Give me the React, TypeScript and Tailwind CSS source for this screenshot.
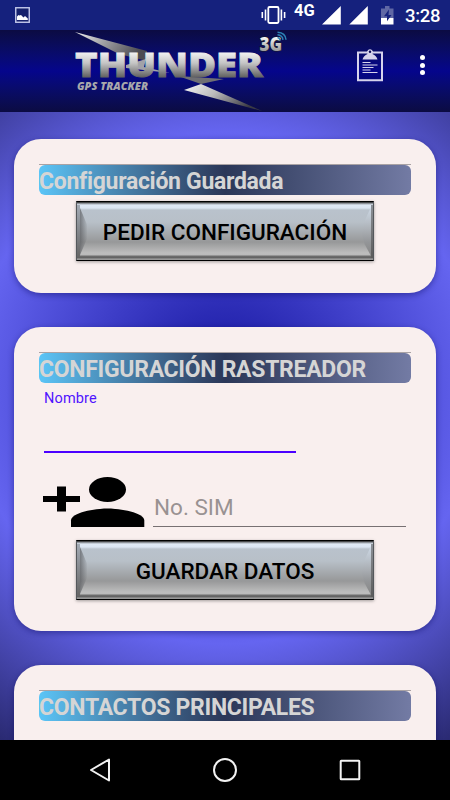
import type { ReactNode } from "react"

const StatusBar = () => (
  <div className="flex h-[30px] shrink-0 items-center bg-[#15217d] pl-[15px] pr-[10px] text-white">
    <svg width="15" height="16" viewBox="0 0 15 16">
      <rect x="0.75" y="0.75" width="13.5" height="14.5" fill="#15206c" stroke="#c4c9ec" strokeWidth="1.4" />
      <path d="M2 13V9.5L3.5 8l1 .6L6 8l2.5 2.4L10 9l2.8 2.5V13Z" fill="#fff" />
    </svg>
    <svg className="ml-auto" width="25" height="18" viewBox="0 0 25 18">
      <rect x="7.3" y="1" width="10.2" height="16" rx="1.2" fill="none" stroke="#fff" strokeWidth="1.8" />
      <path d="M4.5 3.5v11M20.4 3.5v11" stroke="#fff" strokeWidth="1.6" />
      <path d="M1.3 6v6M23.6 6v6" stroke="#fff" strokeWidth="1.6" />
    </svg>
    <span className="mb-[7px] ml-[8px] w-[23px] text-[16.5px] font-bold leading-none">4G</span>
    <svg className="ml-[4px]" width="48" height="20" viewBox="0 0 48 20">
      <path d="M1 19.5 19.8 1v18.5ZM28.3 19.5 46.8 1v18.5Z" fill="#fff" />
    </svg>
    <svg className="ml-[12px]" width="13" height="19" viewBox="0 0 13 19">
      <path d="M0 2.5h4V0h4.5v2.5h4V12H0Z" fill="#6068a5" />
      <path d="M0 12h12.5v6.5H0Z" fill="#fff" />
      <path d="M8 3.5 3 10.2h3v5L10.5 9h-3Z" fill="#15217d" />
    </svg>
    <span className="ml-[11px] mt-[2px] w-[35px] whitespace-nowrap text-[18.5px] font-medium leading-none tracking-[-0.3px]">
      3:28
    </span>
  </div>
)

const Logo = () => (
  <svg className="ml-[70px] shrink-0" width="220" height="82" viewBox="70 30 220 82">
    <defs>
      <linearGradient id="metal" gradientUnits="userSpaceOnUse" x1="0" y1="52" x2="0" y2="77">
        <stop offset="0" stopColor="#f4f4f4" />
        <stop offset="0.45" stopColor="#c4c4c4" />
        <stop offset="1" stopColor="#626262" />
      </linearGradient>
      <linearGradient id="boltTop" x1="0" y1="0" x2="1" y2="0.3">
        <stop offset="0" stopColor="#f0f0f0" />
        <stop offset="0.5" stopColor="#9a9a9e" />
        <stop offset="1" stopColor="#4c4c52" />
      </linearGradient>
      <linearGradient id="boltBottom" x1="0" y1="0" x2="1" y2="0.4">
        <stop offset="0" stopColor="#f6f6f6" />
        <stop offset="0.45" stopColor="#bcbcbc" />
        <stop offset="1" stopColor="#3a3a44" />
      </linearGradient>
      <linearGradient id="badge" gradientUnits="userSpaceOnUse" x1="0" y1="36" x2="0" y2="51">
        <stop offset="0" stopColor="#fff" />
        <stop offset="1" stopColor="#9a9a9a" />
      </linearGradient>
    </defs>
    <path d="M75 32 147 51V61L119 54Z" fill="url(#boltTop)" />
    <path d="M126 65 146 59 144 67 170 73 126 68Z" fill="#a2a2a8" />
    <path d="M178 76 224 79 201 84Z" fill="#6f6f73" />
    <path d="M201 84 262 111 184 90Z" fill="url(#boltBottom)" />
    <text
      x="75"
      y="76.5"
      fontSize="34"
      fontWeight="800"
      fontFamily="Open Sans"
      fill="url(#metal)"
      stroke="url(#metal)"
      strokeWidth="0.8"
      textLength="188"
      lengthAdjust="spacingAndGlyphs"
    >
      THUNDER
    </text>
    <text
      x="77"
      y="89.5"
      fontSize="11"
      fontWeight="800"
      fontStyle="italic"
      fontFamily="Open Sans"
      fill="#a8a8ac"
      textLength="71"
      lengthAdjust="spacingAndGlyphs"
    >
      GPS TRACKER
    </text>
    <text
      x="259.5"
      y="50.5"
      fontSize="20"
      fontWeight="800"
      fontFamily="Open Sans"
      fill="url(#badge)"
      stroke="#1c1c24"
      strokeWidth="1.2"
      paintOrder="stroke"
      textLength="22.5"
      lengthAdjust="spacingAndGlyphs"
    >
      3G
    </text>
    <g fill="none" stroke="#2d83b4" strokeWidth="1.5">
      <path d="M277.5 37.5q2.5 .4 2.7 3M277.5 34.800q5 .4 5.500 5M277.500 32.200q8 .4 8.500 7.500" />
    </g>
  </svg>
)

const AppBar = () => (
  <div className="flex h-[82px] shrink-0 items-center bg-linear-to-b from-[#0b0b42] via-[#05058c] to-[#0b0b42]">
    <Logo />
    <svg className="-mt-[12px] ml-[67px]" width="26" height="34" viewBox="0 0 26 34">
      <path d="M1 4.5h24v27.7H1Z" fill="none" stroke="#d6d3ec" strokeWidth="2" />
      <path d="M5.5 11.5q1-4 5-5.5A3 3 0 1 1 15.5 6q4 1.5 5 5.5Z" fill="#d6d3ec" />
      <circle cx="13" cy="3.8" r="1.2" fill="#0a0a55" />
      <path d="M5.5 14.5h8M5.5 17h15M5.5 19.5h11M5.5 22h8M5.5 24.5h15" stroke="#d6d3ec" strokeWidth="1" />
    </svg>
    <div className="-mt-[12px] ml-[37px] flex flex-col gap-[2.5px]">
      <span className="size-[5px] rounded-full bg-white" />
      <span className="size-[5px] rounded-full bg-white" />
      <span className="size-[5px] rounded-full bg-white" />
    </div>
  </div>
)

const Card = ({ className, children }: { className: string; children: ReactNode }) => (
  <section
    className={`shrink-0 rounded-[27px] bg-[#f9efee] px-[25px] pt-[25px] shadow-[0_2px_6px_rgba(0,0,80,0.4)] ${className}`}
  >
    {children}
  </section>
)

const CardTitle = ({ children }: { children: string }) => (
  <div className="w-[372px] border-t border-[#a9a2a4]">
    <h2 className="h-[30px] whitespace-nowrap rounded-[6px] bg-linear-to-r from-[#5bc5f7] via-[#2b3758] to-[#737ba4] text-[23px] font-bold leading-[33px] tracking-[-0.3px] text-[#d5d5d5]">
      {children}
    </h2>
  </div>
)

const MetalButton = ({ children }: { children: string }) => (
  <button className="relative ml-[37px] block h-[60px] w-[298px] border border-x-[#55585c] border-y-black bg-[#7d7d7d] shadow-[0_1px_3px_rgba(0,0,0,0.35)]">
    {/* metal face, then the left and right bevels over it */}
    <span className="absolute inset-x-0 top-0 bottom-0 bg-[linear-gradient(to_bottom,#222_0px,#8d9299_1.5px,#e0e9f5_3px,#dbe5f2_6px,#b9c2cc_8px,#b8c0c8_20px,#979899_40px,#bdbdbd_51px,#bababa_53px,#6e6e6e_54px,#606060_56px,#a8a8a8_57px,#888_58px)]" />
    <span className="absolute top-[3px] bottom-[3px] left-0 w-[3px] bg-linear-to-b from-[#a3abb5] to-[#666]" />
    <span className="absolute top-[6px] bottom-[5px] left-[3px] w-[7px] bg-[linear-gradient(to_right,rgba(90,92,96,0.7),rgba(120,124,128,0.1))] [clip-path:polygon(0_0,100%_35%,100%_66%,0_100%)]" />
    <span className="absolute top-[5px] right-[2px] bottom-[4px] w-[9px] bg-linear-to-b from-[#d2deeb] via-[#a8acb1] to-[#777] opacity-80 [clip-path:polygon(100%_0,30%_28%,0_55%,30%_76%,100%_100%)]" />
    <span className="absolute top-[3px] right-0 bottom-[2px] w-[2px] bg-linear-to-b from-[#8b9096] to-[#5c5c5c]" />
    <span className="relative top-[0.5px] whitespace-nowrap text-[22.5px] font-medium leading-[58px] text-black">
      {children}
    </span>
  </button>
)

const AddPersonIcon = () => (
  <svg width="102" height="50" viewBox="0 0 102 50">
    <path d="M0 19h14V9.5h9V19h14v6H23v9.5h-9V25H0Z" />
    <ellipse cx="64.5" cy="12.5" rx="18.5" ry="12.5" />
    <path d="M28 50v-6.5C28 35.5 52 31.5 64.500 31.500S101.300 35.500 101.300 43.500V50Z" />
  </svg>
)

const NavBar = () => (
  <nav className="flex h-[60px] shrink-0 items-center justify-between bg-black px-[88px]">
    <svg width="24" height="26" viewBox="0 0 24 26">
      <path d="M21 2.5v21L3 13Z" fill="none" stroke="#f2f2f2" strokeWidth="2" strokeLinejoin="round" />
    </svg>
    <svg width="26" height="26" viewBox="0 0 26 26">
      <circle cx="13" cy="13" r="11" fill="none" stroke="#f2f2f2" strokeWidth="2" />
    </svg>
    <svg width="24" height="24" viewBox="0 0 24 24">
      <rect x="2.7" y="2.7" width="18.6" height="18.6" rx="0.5" fill="none" stroke="#f2f2f2" strokeWidth="2" />
    </svg>
  </nav>
)

export default function App() {
  return (
    <div className="flex h-[800px] w-[450px] flex-col overflow-hidden font-['Roboto',sans-serif]">
      <StatusBar />
      <AppBar />
      <main className="flex min-h-0 flex-1 flex-col gap-[34px] overflow-hidden bg-[radial-gradient(circle_at_225px_276px,#12129b_0px,#6565f0_256px,#2a2a72_417px)] px-[14px] pt-[27px]">
        <Card className="h-[154px]">
          <CardTitle>Configuración Guardada</CardTitle>
          <div className="mt-[6px]">
            <MetalButton>PEDIR CONFIGURACIÓN</MetalButton>
          </div>
        </Card>
        <Card className="h-[304px]">
          <CardTitle>CONFIGURACIÓN RASTREADOR</CardTitle>
          <div className="ml-[5px] h-[70px] w-[252px] border-b-2 border-[#4c00ff] pt-[6px] text-[14.5px] leading-[20px] tracking-[0.15px] text-[#5014ff]">
            Nombre
          </div>
          <div className="mt-[24px] ml-[4px] flex items-start">
            <AddPersonIcon />
            <div className="ml-[8px] h-[50px] w-[253px] border-b border-[#777072] pt-[14px] pl-[1px] text-[22.5px] leading-[32px] text-[#999292]">
              No. SIM
            </div>
          </div>
          <div className="mt-[13px]">
            <MetalButton>GUARDAR DATOS</MetalButton>
          </div>
        </Card>
        <Card className="h-[120px]">
          <CardTitle>CONTACTOS PRINCIPALES</CardTitle>
        </Card>
      </main>
      <NavBar />
    </div>
  )
}
